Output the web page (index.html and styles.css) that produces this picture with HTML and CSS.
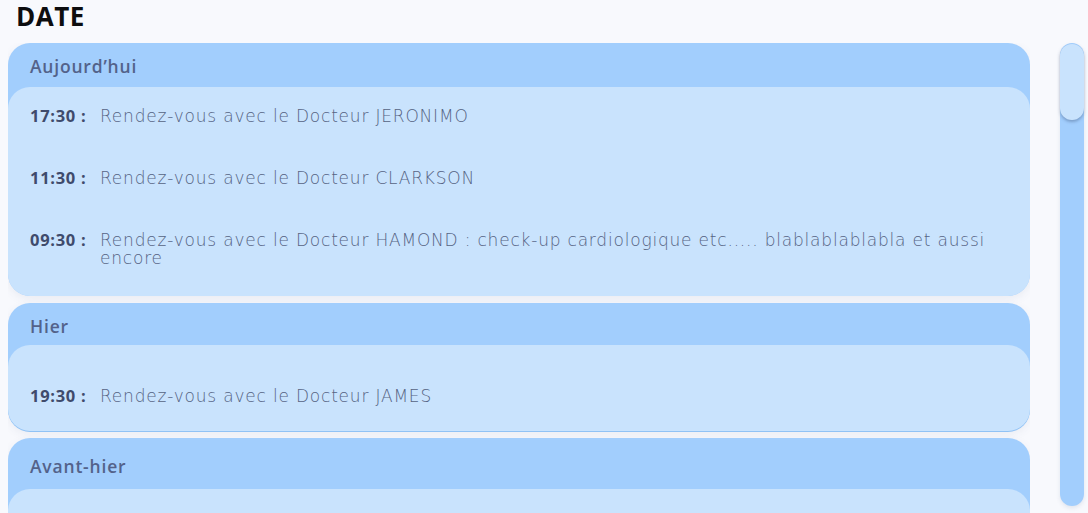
FILE: index.html
```html
<!DOCTYPE html>
<html lang="fr">
<head>
<meta charset="utf-8">
<title>Date</title>
<link rel="stylesheet" href="styles.css">
</head>
<body>
<div class="page">
  <h1 class="title">DATE</h1>
  <div class="content">
    <div class="list">
      <section class="card card-today">
        <div class="card-head">Aujourd’hui</div>
        <div class="card-body">
          <div class="row"><span class="time">17:30 :</span><span class="text">Rendez-vous avec le Docteur JERONIMO</span></div>
          <div class="row"><span class="time">11:30 :</span><span class="text">Rendez-vous avec le Docteur CLARKSON</span></div>
          <div class="row"><span class="time">09:30 :</span><span class="text">Rendez-vous avec le Docteur HAMOND : check-up cardiologique etc..... blablablablabla et aussi encore</span></div>
        </div>
      </section>
      <section class="card card-yesterday">
        <div class="card-head">Hier</div>
        <div class="card-body">
          <div class="row"><span class="time">19:30 :</span><span class="text">Rendez-vous avec le Docteur JAMES</span></div>
        </div>
      </section>
      <section class="card card-before">
        <div class="card-head">Avant-hier</div>
        <div class="card-body"></div>
      </section>
    </div>
    <div class="scrollbar"><div class="thumb"></div></div>
  </div>
</div>
</body>
</html>
```
FILE: styles.css
```css
html, body {
  margin: 0;
  padding: 0;
  height: 100%;
  overflow: hidden;
}
body {
  background: #f8f9fd;
  font-family: "Open Sans", "Noto Sans", sans-serif;
  color: #4a5878;
}
.page {
  display: flex;
  flex-direction: column;
  height: 513px;
}
.title {
  margin: 0;
  padding: 0 0 0 16px;
  height: 43px;
  line-height: 32px;
  font-size: 26px;
  font-weight: 700;
  color: #0d0d0f;
  letter-spacing: 0.5px;
}
.content {
  flex: 1;
  display: flex;
  min-height: 0;
  padding-left: 8px;
}
.list {
  width: 1022px;
  display: flex;
  flex-direction: column;
  gap: 7px;
  overflow: hidden;
}
.card {
  flex-shrink: 0;
  background: #a2cefd;
  border-radius: 22px;
  box-shadow: 0 3px 10px rgba(60, 80, 120, 0.08);
}
.card-head {
  height: 44px;
  box-sizing: border-box;
  padding: 10px 22px 0;
  font-size: 17.5px;
  font-weight: 600;
  letter-spacing: 0.8px;
  color: #53628a;
  line-height: 26px;
}
.card-body {
  background: #c9e3fd;
  border-radius: 22px;
  padding: 20px 22px 29px;
  display: flex;
  flex-direction: column;
  gap: 44px;
}
.card-yesterday .card-head {
  height: 42px;
}
.card-yesterday .card-body {
  padding-top: 42px;
  padding-bottom: 26px;
  box-shadow: 0 1px 0 #90c2f5;
}
.card-before .card-head {
  height: 51px;
  padding-top: 15px;
}
.card-before .card-body {
  height: 60px;
  padding: 0;
}
.row {
  display: flex;
  align-items: flex-start;
  font-size: 17px;
  line-height: 18px;
}
.time {
  flex: 0 0 70px;
  font-weight: 700;
  color: #3f4b6c;
  font-size: 16.5px;
  letter-spacing: 0.7px;
}
.text {
  flex: 1;
  font-family: "DejaVu Sans", sans-serif;
  font-weight: 200;
  letter-spacing: 0.8px;
  color: #566484;
}
.scrollbar {
  margin-left: 30px;
  width: 24px;
  height: 463px;
  background: #a2cefd;
  border-radius: 12px;
  position: relative;
  box-shadow: 0 2px 4px rgba(60, 80, 120, 0.12);
}
.thumb {
  position: absolute;
  top: 1px;
  left: 0;
  width: 24px;
  height: 76px;
  border-radius: 12px;
  background: #c9e3fd;
  box-shadow: 0 2px 3px rgba(50, 70, 110, 0.35);
}
```
